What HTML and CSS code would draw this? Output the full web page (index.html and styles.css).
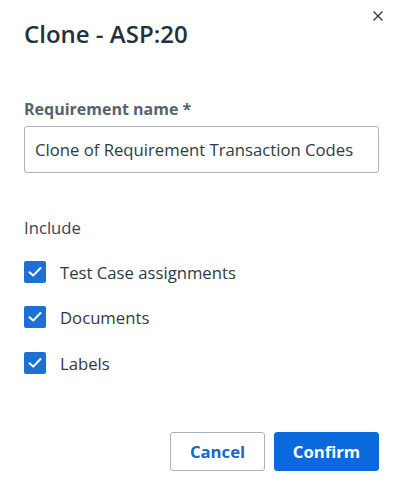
FILE: index.html
```html
<!DOCTYPE html>
<html>
<head>
<meta charset="utf-8">
<link rel="stylesheet" href="styles.css">
</head>
<body>
<div class="dialog">
  <button class="close" aria-label="Close">
    <svg width="10" height="10" viewBox="0 0 10 10"><path d="M0.5 0.5L9.5 9.5M9.5 0.5L0.5 9.5" stroke="#2b3440" stroke-width="1.3" fill="none"/></svg>
  </button>
  <h1 class="title">Clone - ASP:20</h1>
  <div class="field">
    <label class="field-label">Requirement name *</label>
    <div class="input">Clone of Requirement Transaction Codes</div>
  </div>
  <div class="include">
    <div class="include-title">Include</div>
    <div class="check-row"><span class="box"><svg width="14" height="12" viewBox="0 0 14 12"><path d="M1.5 6.2L5.2 9.6L12.5 2" stroke="#fff" stroke-width="2" fill="none" stroke-linecap="round" stroke-linejoin="round"/></svg></span><span class="check-label">Test Case assignments</span></div>
    <div class="check-row"><span class="box"><svg width="14" height="12" viewBox="0 0 14 12"><path d="M1.5 6.2L5.2 9.6L12.5 2" stroke="#fff" stroke-width="2" fill="none" stroke-linecap="round" stroke-linejoin="round"/></svg></span><span class="check-label">Documents</span></div>
    <div class="check-row last"><span class="box"><svg width="14" height="12" viewBox="0 0 14 12"><path d="M1.5 6.2L5.2 9.6L12.5 2" stroke="#fff" stroke-width="2" fill="none" stroke-linecap="round" stroke-linejoin="round"/></svg></span><span class="check-label">Labels</span></div>
  </div>
  <div class="actions">
    <button class="btn btn-secondary">Cancel</button>
    <button class="btn btn-primary">Confirm</button>
  </div>
</div>
</body>
</html>
```
FILE: styles.css
```css
* { box-sizing: border-box; }
html, body { margin: 0; padding: 0; background: #fff; }
body { font-family: "Open Sans", "Noto Sans", sans-serif; color: #2b3440; }
.dialog { position: relative; width: 407px; height: 499px; padding: 18px 28px 0 24px; }
.close { position: absolute; top: 11px; right: 24px; width: 10px; height: 10px; padding: 0; border: 0; background: none; line-height: 0; }
.title { margin: 0; font-size: 24px; font-weight: 600; line-height: 32px; color: #253039; }
.field { margin-top: 49px; }
.field-label { display: block; font-size: 16px; font-weight: 700; line-height: 20px; color: #56636e; }
.input { margin-top: 7px; height: 47px; border: 1px solid #a9b4bd; border-radius: 3px; padding: 0 10px; display: flex; align-items: center; font-size: 16.7px; color: #2f3a44; }
.include { margin-top: 43px; }
.include-title { font-size: 16.7px; line-height: 24px; color: #3a4450; }
.check-row { display: flex; align-items: center; gap: 14px; height: 22px; margin-top: 21px; }
.check-row + .check-row { margin-top: 23px; }
.check-row.last { margin-top: 24px; }
.box { width: 22px; height: 22px; border-radius: 2px; background: #1b6fd5; display: flex; align-items: center; justify-content: center; }
.check-label { font-size: 16.7px; color: #2f3a44; }
.actions { display: flex; justify-content: flex-end; gap: 9px; margin-top: 58px; }
.btn { height: 39px; border-radius: 3px; font-family: inherit; font-size: 16.7px; font-weight: 700; padding: 0; }
.btn-secondary { width: 95px; border: 1px solid #a9b4bd; background: #fff; color: #1466d0; }
.btn-primary { width: 105px; border: 1px solid #0a69dc; background: #0a69dc; color: #fff; }
```
